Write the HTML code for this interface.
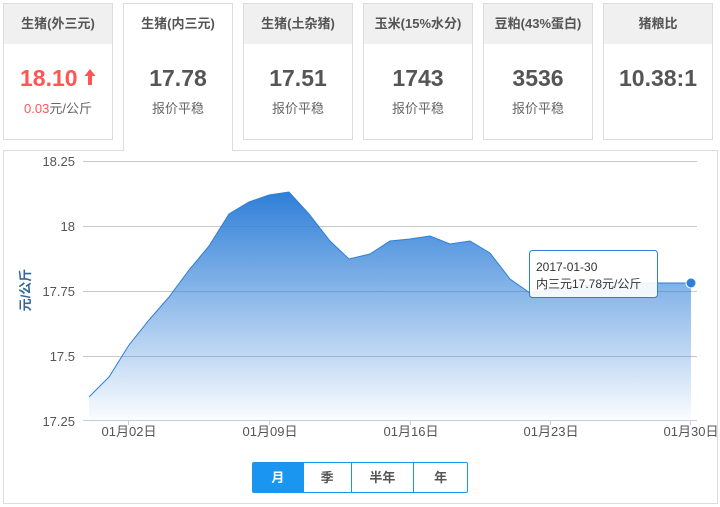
<!DOCTYPE html>
<html><head><meta charset="utf-8"><style>
*{margin:0;padding:0;box-sizing:border-box}
body{width:720px;height:507px;background:#fff;font-family:"Liberation Sans","Noto Sans CJK SC",sans-serif;position:relative;overflow:hidden}
.card{position:absolute;top:3px;width:110px;height:137px;border:1px solid #ddd;background:#fff;text-align:center}
.card .h{height:40px;background:#f0f0f0;line-height:40px;font-size:13px;font-weight:bold;color:#555}
.card .v{margin-top:21px;font-size:23px;font-weight:bold;color:#555;line-height:26px}
.card .s{margin-top:7px;font-size:13px;color:#666}
.act{height:148px;border-bottom:none;z-index:2}
.act .h{background:#fff}
.panel{position:absolute;left:3px;top:150px;width:715px;height:354px;border:1px solid #ddd}
.btns{position:absolute;left:252px;top:462px;width:216px;height:31px;border:1px solid #1a96f0;border-radius:2px;display:flex;font-size:13px;font-weight:bold;color:#555}
.btns div{border-left:1px solid #1a96f0;text-align:center;line-height:29px}
.btns div:first-child{border-left:none;background:#1a96f0;color:#fff}
</style></head><body>
<div class="card" style="left:3px"><div class="h">生猪(外三元)</div><div class="v" style="color:#f55">18.10 <svg width="12" height="18" viewBox="0 0 12 18" style="vertical-align:0"><path d="M6 1 L11.5 8 L8 8 L8 17 L4 17 L4 8 L0.5 8 Z" fill="#f55"/></svg></div><div class="s"><span style="color:#f55">0.03</span>元/公斤</div></div>
<div class="panel"></div>
<div class="card act" style="left:123px"><div class="h">生猪(内三元)</div><div class="v">17.78</div><div class="s">报价平稳</div></div>
<div class="card" style="left:243px"><div class="h">生猪(土杂猪)</div><div class="v">17.51</div><div class="s">报价平稳</div></div>
<div class="card" style="left:363px"><div class="h">玉米(15%水分)</div><div class="v">1743</div><div class="s">报价平稳</div></div>
<div class="card" style="left:483px"><div class="h">豆粕(43%蛋白)</div><div class="v">3536</div><div class="s">报价平稳</div></div>
<div class="card" style="left:603px"><div class="h">猪粮比</div><div class="v">10.38:1</div></div>
<svg style="position:absolute;left:0;top:0" width="720" height="507" font-family="Liberation Sans,Noto Sans CJK SC,sans-serif">
<defs><linearGradient id="g" x1="0" y1="0" x2="0" y2="1"><stop offset="0" stop-color="#2f7fd8"/><stop offset="1" stop-color="#2f7fd8" stop-opacity="0.02"/></linearGradient></defs>
<g stroke="#c8c8c8" stroke-width="1"><line x1="83" y1="161.5" x2="697" y2="161.5"/><line x1="83" y1="226.5" x2="697" y2="226.5"/><line x1="83" y1="291.5" x2="697" y2="291.5"/><line x1="83" y1="356.5" x2="697" y2="356.5"/></g>
<line x1="83" y1="420.5" x2="697" y2="420.5" stroke="#c0d0e0"/>
<g stroke="#c0d0e0"><line x1="128.5" y1="420" x2="128.5" y2="425"/><line x1="269.5" y1="420" x2="269.5" y2="425"/><line x1="410.5" y1="420" x2="410.5" y2="425"/><line x1="550.5" y1="420" x2="550.5" y2="425"/><line x1="690.5" y1="420" x2="690.5" y2="425"/></g>
<path d="M89 397 L109 377 L129 345 L149 320 L169 297 L189 270 L209 246 L229 214 L249 202 L269 195 L289 192 L309 214 L330 241 L349 259 L370 254 L390 241 L410 239 L430 236 L450 244 L470 241 L490 253 L510 279 L530 293 L550 290 L570 287 L590 285 L610 284 L630 283 L650 283 L670 283 L691 283 L691 420 L89 420 Z" fill="url(#g)"/>
<path d="M89 397 L109 377 L129 345 L149 320 L169 297 L189 270 L209 246 L229 214 L249 202 L269 195 L289 192 L309 214 L330 241 L349 259 L370 254 L390 241 L410 239 L430 236 L450 244 L470 241 L490 253 L510 279 L530 293 L550 290 L570 287 L590 285 L610 284 L630 283 L650 283 L670 283 L691 283" fill="none" stroke="#2f7fd8" stroke-width="1"/>
<circle cx="691" cy="283" r="5" fill="#2f7fd8" stroke="#fff" stroke-width="1"/>
<g font-size="13" fill="#555" text-anchor="end"><text x="75" y="166">18.25</text><text x="75" y="231">18</text><text x="75" y="296">17.75</text><text x="75" y="361">17.5</text><text x="75" y="426">17.25</text></g>
<g font-size="13" fill="#555" text-anchor="middle"><text x="129" y="436">01月02日</text><text x="270" y="436">01月09日</text><text x="411" y="436">01月16日</text><text x="551" y="436">01月23日</text><text x="691" y="436">01月30日</text></g>
<text transform="translate(30 290) rotate(-90)" font-size="13" font-weight="bold" fill="#336699" text-anchor="middle">元/公斤</text>
<rect x="529.5" y="250.5" width="128" height="47" rx="3" fill="#fff" fill-opacity="0.9" stroke="#2f7fd8"/>
<text x="536" y="271" font-size="12" fill="#333">2017-01-30</text>
<text x="536" y="288" font-size="12" fill="#333">内三元17.78元/公斤</text>
</svg>
<div class="btns"><div style="width:50px">月</div><div style="width:48px">季</div><div style="width:63px">半年</div><div style="width:54px">年</div></div>
</body></html>
